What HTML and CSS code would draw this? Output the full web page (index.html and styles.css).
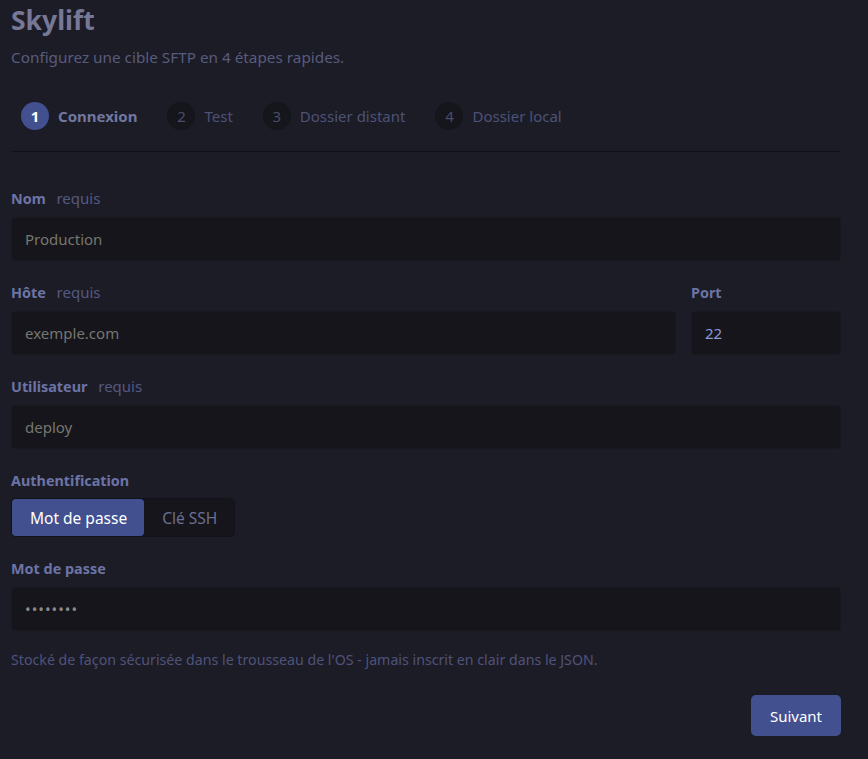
FILE: index.html
```html
<!DOCTYPE html>
<html>
  <head>
    <meta name="viewport" content="width=device-width, initial-scale=1">
    <link rel="stylesheet" href="styles.css">
  </head>
  <body>
    <div class="page">
      <h1>Skylift</h1>
      <p class="lead">Configurez une cible SFTP en 4 étapes rapides.</p>

      <ol class="steps">
        <li class="step active"><span class="num">1</span>Connexion</li>
        <li class="step"><span class="num">2</span>Test</li>
        <li class="step"><span class="num">3</span>Dossier distant</li>
        <li class="step"><span class="num">4</span>Dossier local</li>
      </ol>

      <form class="form">
        <div class="field">
          <label>Nom <small>requis</small></label>
          <div class="input">Production</div>
        </div>

        <div class="row">
          <div class="field grow">
            <label>Hôte <small>requis</small></label>
            <div class="input">exemple.com</div>
          </div>
          <div class="field port">
            <label>Port</label>
            <div class="input num-value">22</div>
          </div>
        </div>

        <div class="field">
          <label>Utilisateur <small>requis</small></label>
          <div class="input">deploy</div>
        </div>

        <div class="field">
          <label>Authentification</label>
          <div class="segmented">
            <span class="seg on">Mot de passe</span>
            <span class="seg">Clé SSH</span>
          </div>
        </div>

        <div class="field">
          <label>Mot de passe</label>
          <div class="input dots">••••••••</div>
        </div>

        <p class="hint">Stocké de façon sécurisée dans le trousseau de l'OS - jamais inscrit en clair dans le JSON.</p>

        <div class="actions">
          <button type="button" class="submit">Suivant</button>
        </div>
      </form>
    </div>
  </body>
</html>
```

FILE: styles.css
```css
body { margin: 0; background-color: #1c1c26; font-family: "Noto Sans", sans-serif; font-size: 14px; color: #6c74a6 }
.page { width: 830px; padding: 0 0 0 11px }
h1 { margin: 0; padding-top: 1px; font-size: 26.5px; line-height: 38px; font-weight: bold; color: #777897 }
.lead { margin: 8px 0 0; font-size: 15.3px; line-height: 20px; color: #585b7e }
.steps { list-style: none; margin: 35px 0 0; padding: 0 0 21px 10px; display: flex; gap: 30px; border-bottom: 1px solid #101017 }
.step { display: flex; align-items: center; gap: 9px; font-size: 15px; color: #4d5276 }
.step .num { width: 28px; height: 28px; border-radius: 50%; background: #15151c; display: flex; align-items: center; justify-content: center; color: #4a4d68 }
.step.active { color: #7277a0; font-weight: bold }
.step.active .num { background: #42508f; color: #ffffff }
.form { padding-top: 37px }
.field { display: flex; flex-direction: column; margin-bottom: 22px }
.field label { display: block; height: 20px; font-weight: bold; font-size: 14.4px; line-height: 20px; margin-bottom: 8px; color: #6c74a6 }
.field label small { font-weight: normal; font-size: 15px; line-height: 1; color: #545981; margin-left: 7px }
.input { height: 44px; box-sizing: border-box; padding: 0 13px; display: flex; align-items: center; background: #15151b; border: 1px solid #18181f; border-radius: 4px; font-size: 15px; color: #77776f }
.num-value { color: #8b9ad6 }
.dots { font-size: 15px; letter-spacing: 1px; color: #8a8a86 }
.row { display: flex; gap: 15px }
.grow { flex: 1 }
.port { width: 150px }
.segmented { display: inline-flex; align-self: flex-start; margin-top: -1px; background: #15151b; border: 1px solid #121218; border-radius: 5px; height: 39px; box-sizing: border-box }
.seg { display: flex; align-items: center; padding: 0 17px 0 18px; font-size: 15.5px; color: #6b6f90; border-radius: 4px }
.seg.on { background: #42508f; color: #ffffff }
.hint { margin: -3px 0 0; font-size: 14.2px; color: #4f537a; line-height: 20px }
.actions { display: flex; justify-content: flex-end; margin-top: 25px }
.submit { height: 41px; padding: 0 19px; border: none; border-radius: 5px; background: #42508f; color: #ffffff; font-family: inherit; font-size: 15px }
```
